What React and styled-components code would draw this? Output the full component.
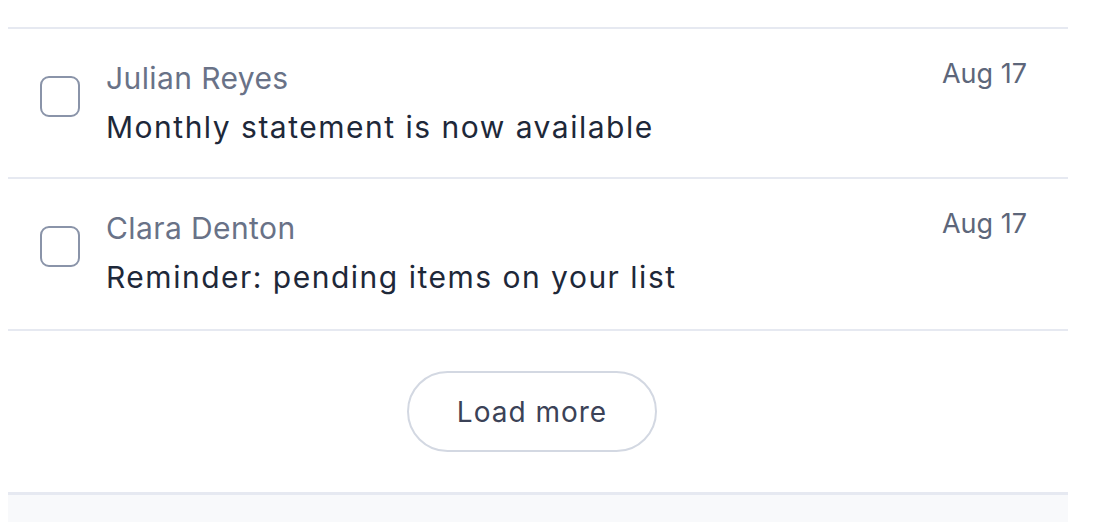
import React from "react";
import styled, { createGlobalStyle } from "styled-components";

const Global = createGlobalStyle`
  html, body { margin: 0; padding: 0; background: #ffffff; }
  body { font-family: "Inter", "Noto Sans", sans-serif; -webkit-font-smoothing: antialiased; }
`;

const Page = styled.div`
  width: 1106px;
  height: 522px;
  overflow: hidden;
  background: #ffffff;
  padding-top: 27px;
  box-sizing: border-box;
`;

const Panel = styled.div`
  width: 1060px;
  margin-left: 8px;
  display: flex;
  flex-direction: column;
`;

const Row = styled.div`
  display: flex;
  align-items: flex-start;
  height: ${(p) => p.$h}px;
  box-sizing: border-box;
  border-top: 2px solid #e6e9f1;
  padding: 31px 41px 0 32px;
`;

const Check = styled.span`
  flex: none;
  width: 40px;
  height: 41px;
  margin-top: 16px;
  box-sizing: border-box;
  border: 2px solid #8a94a9;
  border-radius: 9px;
  background: #fff;
`;

const Body = styled.div`
  flex: 1;
  display: flex;
  flex-direction: column;
  margin-left: 26px;
`;

const Name = styled.div`
  font-size: 30px;
  line-height: 36px;
  letter-spacing: 0.4px;
  color: #697287;
`;

const Subject = styled.div`
  font-size: 30px;
  line-height: 40px;
  letter-spacing: 1.5px;
  margin-top: 11px;
  color: #1e2839;
`;

const DateText = styled.div`
  flex: none;
  font-size: 27px;
  line-height: 32px;
  margin-top: -2px;
  color: #5d667a;
`;

const Footer = styled.div`
  display: flex;
  justify-content: center;
  align-items: center;
  height: 163px;
  box-sizing: border-box;
  border-top: 2px solid #e6e9f1;
  padding-right: 12px;
`;

const LoadMore = styled.button`
  width: 250px;
  height: 81px;
  padding: 0;
  border: 2px solid #d3d8e2;
  border-radius: 41px;
  background: #fff;
  font-family: inherit;
  font-size: 28px;
  letter-spacing: 1px;
  color: #3b4257;
  cursor: pointer;
`;

const Bottom = styled.div`
  height: 40px;
  border-top: 3px solid #e6e9f1;
  background: #f8f9fb;
`;

const items = [
  { name: "Julian Reyes", subject: "Monthly statement is now available", date: "Aug 17", h: 150 },
  { name: "Clara Denton", subject: "Reminder: pending items on your list", date: "Aug 17", h: 152 },
];

export default function App() {
  return (
    <Page>
      <Global />
      <Panel>
        {items.map((it) => (
          <Row key={it.name} $h={it.h}>
            <Check />
            <Body>
              <Name>{it.name}</Name>
              <Subject>{it.subject}</Subject>
            </Body>
            <DateText>{it.date}</DateText>
          </Row>
        ))}
        <Footer>
          <LoadMore>Load more</LoadMore>
        </Footer>
        <Bottom />
      </Panel>
    </Page>
  );
}
